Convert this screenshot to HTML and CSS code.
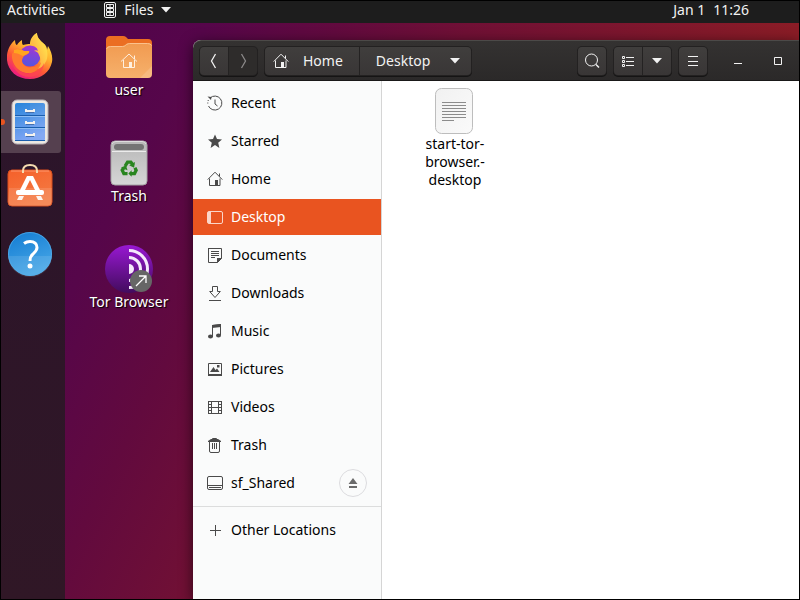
FILE: index.html
```html
<!DOCTYPE html>
<html lang="en">
<head>
<meta charset="utf-8">
<title>Files</title>
<link rel="stylesheet" href="styles.css">
</head>
<body>
<svg class="defs" aria-hidden="true">
  <symbol id="home" viewBox="0 0 16 16">
    <path d="M.7 8.6 8 1.2l7.3 7.4M12.5 5.500V2.500M2.500 7.500v7h10.500v-7" fill="none" stroke="currentColor"/>
    <path d="M8 9h3v6H8z" fill="currentColor"/>
  </symbol>
  <symbol id="caret" viewBox="0 0 10 6"><path d="M0 0h10L5 5.500z" fill="currentColor"/></symbol>
</svg>
<div class="screen">
  <header class="topbar">
    <button class="activities">Activities</button>
    <button class="app-menu">
      <svg width="12" height="16" viewBox="0 0 12 16" fill="none" stroke="currentColor"><rect x=".5" y=".5" width="11" height="15" rx="1.500"/><path d="M2.500 2.500h7v3h-7zM2.500 6.500h7v3h-7zM2.500 10.500h7v3h-7zM5 4h2M5 8h2M5 12h2"/></svg>
      <span>Files</span>
      <svg width="10" height="6"><use href="#caret"/></svg>
    </button>
    <button class="clock"><span>Jan 1</span><span>11:26</span></button>
  </header>
  <div class="workspace">
    <nav class="dock" aria-label="Dock">
      <button class="tile" aria-label="Firefox">
        <svg width="46" height="46" viewBox="0 0 46 46">
          <defs>
            <linearGradient id="fa" x1=".8" y1="0" x2=".25" y2="1"><stop offset="0" stop-color="#fff14a"/><stop offset=".4" stop-color="#ffb02e"/><stop offset=".65" stop-color="#ff5a35"/><stop offset="1" stop-color="#e8138a"/></linearGradient>
            <linearGradient id="fb" x1=".6" y1="0" x2=".4" y2="1"><stop offset="0" stop-color="#a436d2"/><stop offset="1" stop-color="#5455e0"/></linearGradient>
            <linearGradient id="fc" x1="1" y1="0" x2="0" y2="1"><stop offset="0" stop-color="#fff44f"/><stop offset="1" stop-color="#ff9640"/></linearGradient>
          </defs>
          <path d="M8 7c0 3 1 5 2 5 1-2 3-4 5-5 0 3 0 4 1 5 3-1 5-1 7-1 0-5 3-9 7-11 0 5 3 7 6 10 3 2 4 4 4 7l1-4c3 5 5 10 4 16-2 10-11 17-22 17C10 46 1 38 0 27-1 19 3 11 8 7z" fill="url(#fa)"/>
          <circle cx="23" cy="23" r="10.500" fill="url(#fb)"/>
          <path d="M24 11c0-5 3-9 6-11 0 5 3 7 6 10 5 5 6 15 2 20-2 4-6 6-10 6 5-3 7-9 4-14-1-3-3-4-5-4 1-1 3-1 4 0-1-4-4-6-7-7z" fill="url(#fc)"/>
          <path d="M8 16c4-1 7 1 9 2h5c1 2-1 3-5 5-1 1-2 3-2 5 1 5 5 7 10 6 4 0 7-2 9-5-1 7-7 12-13 11C11 40 4 30 5 21z" fill="#ff7a2f"/>
          <path d="M7 17c4-2 8 0 10 1h5c1 2-2 3-6 5-4-2-6-3-9-3z" fill="#ffa51f"/>
          <path d="M5 29c4 8 11 13 19 11 7-1 11-5 13-10 0 8-7 14-15 14S7 38 5 29z" fill="#ff4650" opacity=".75"/>
        </svg>
      </button>
      <button class="tile active" aria-label="Files">
        <svg width="38" height="46" viewBox="0 0 38 46">
          <defs><linearGradient id="fd" x2=".3" y2="1"><stop stop-color="#2784da"/><stop offset="1" stop-color="#7ea5f4"/></linearGradient></defs>
          <rect x="1" y="1" width="36" height="44" rx="5" fill="#ece8e2" stroke="#b7aeb4"/>
          <rect x="4" y="4" width="30" height="38" rx="2" fill="url(#fd)"/>
          <path d="M19 4h15v38H19z" fill="#fff" opacity=".06"/>
          <path d="M4 16.500h30M4 28.500h30M4 41.500h30" stroke="#1b5ead"/>
          <path d="M4 17.500h30M4 29.500h30" stroke="#8dbdf5"/>
          <path d="M15 10v2h8v-2M15 22v2h8v-2M15 34v2h8v-2" fill="none" stroke="#f5f2ee" stroke-width="2"/>
          <path d="M15 13.500h8M15 25.500h8M15 37.500h8" stroke="#456fad"/>
        </svg>
      </button>
      <button class="tile" aria-label="Ubuntu Software">
        <svg width="46" height="50" viewBox="0 2 46 50">
          <defs><linearGradient id="sa" x2=".5" y2="1"><stop stop-color="#f5602a"/><stop offset="1" stop-color="#f47a42"/></linearGradient></defs>
          <rect x="1" y="9" width="44" height="36" rx="4" fill="url(#sa)" stroke="#d74d1c"/>
          <path d="M2 27h43v14q0 4-4 4H5q-4 0-4-4z" fill="#fff" opacity=".12"/>
          <path d="M4 10h38" stroke="#ff986e"/>
          <path d="M16 12V10q0-6 7-6t7 6v2" fill="none" stroke="#f5dbb0" stroke-width="2"/>
          <path d="M20 15h6l8 16h-5l-6-12-6 12h-5z" fill="#fff"/>
          <rect x="9" y="29" width="28" height="5" rx="2" fill="#fff"/>
          <path d="M12 35h5l-2 4h-5zM29 35h5l2 4h-5z" fill="#fff" opacity=".9"/>
        </svg>
      </button>
      <button class="tile" aria-label="Help">
        <svg width="46" height="46" viewBox="0 0 46 46">
          <defs><linearGradient id="ha" x2=".4" y2="1"><stop stop-color="#127bd2"/><stop offset="1" stop-color="#45a5e6"/></linearGradient></defs>
          <circle cx="23" cy="23" r="22" fill="url(#ha)"/>
          <path d="M1 25h44a22 21 0 0 1-44 0z" fill="#fff" opacity=".1"/>
          <circle cx="23" cy="23" r="21.500" fill="none" stroke="#56aeea" opacity=".7"/>
          <path d="M17 12.500c2-1.500 4-2 6-2 4.500 0 7 2.500 7 6 0 3-2 4.500-4 6.500-2 1.500-3 3-3 7" fill="none" stroke="#fff" stroke-width="3"/>
          <circle cx="23" cy="35" r="2.500" fill="#fff"/>
        </svg>
      </button>
    </nav>
    <main class="icons">
      <a class="desk-item" href="#user">
        <svg width="48" height="48" viewBox="0 0 48 48">
          <defs><linearGradient id="ua" y1="0" x2="0" y2="1"><stop stop-color="#f19a50"/><stop offset="1" stop-color="#f6b16c"/></linearGradient></defs>
          <path d="M1 18V7q0-4 4-4h13q2 0 3 1l2 2h20q4 0 4 4v10z" fill="#eb6e22"/>
          <path d="M1 17q0-4 4-4h12q2 0 3-1l1-1q2-1 3-1h19q4 0 4 3v28q0 4-4 4H5q-4 0-4-4z" fill="url(#ua)"/>
          <path d="M1.500 16q1-2.500 4-2.500h12q2 0 3-1l1-1q2-1 3-1h18q3 0 4 2" fill="none" stroke="#fbc18c"/>
          <path d="M47 33v8q0 4-4 4h-8z" fill="#fff" opacity=".15"/>
          <path d="m16 28.500 8-7.500 8 7.500M29.500 26v-3.500M18.500 27v7.500h11V27" fill="none" stroke="#fff0e0" stroke-width="1"/>
          <path d="M24 29h3v6h-3z" fill="#fff0e0"/>
        </svg>
        <span>user</span>
      </a>
      <a class="desk-item" href="#trash">
        <svg width="48" height="48" viewBox="0 0 48 48">
          <defs><linearGradient id="ta" y1="0" x2="0" y2="1"><stop stop-color="#b7b7b7"/><stop offset="1" stop-color="#d6d6d6"/></linearGradient></defs>
          <rect x="6" y="2" width="36" height="44" rx="4" fill="url(#ta)" stroke="#a5a3a4"/>
          <path d="M7 5q1-2.500 4-2.500h26q3 0 4 2.500" fill="none" stroke="#ddd"/>
          <rect x="9" y="5" width="30" height="6" rx="3" fill="#747474"/>
          <path d="M7 12.500h34" stroke="#ececec"/>
          <g transform="translate(4.500 5) scale(.82)">
            <path d="m19 27 3-5h4l3 4M31 29l1.500 3-2 4H26M22 36h-4.500l-2-4 2-3" fill="none" stroke="#29851f" stroke-width="4"/>
            <path d="m31 22-1 7-6-3zM27 32v8l-4-4zM14 29l6-3 2 6z" fill="#29851f"/>
          </g>
        </svg>
        <span>Trash</span>
      </a>
      <a class="desk-item" href="#tor">
        <svg width="48" height="48" viewBox="0 0 48 48">
          <defs>
            <linearGradient id="oa" y1="0" x2="0" y2="1"><stop stop-color="#9818d2"/><stop offset="1" stop-color="#420c5d"/></linearGradient>
            <clipPath id="ob"><path d="M24 0h24v48H24z"/></clipPath>
          </defs>
          <circle cx="24" cy="24" r="24" fill="url(#oa)"/>
          <g clip-path="url(#ob)" fill="none" stroke="#f5e9fb" stroke-width="3">
            <circle cx="24" cy="24" r="18.500"/><circle cx="24" cy="24" r="11.500"/><circle cx="24" cy="24" r="5" fill="#f5e9fb" stroke="none"/>
          </g>
          <circle cx="36" cy="36" r="11" fill="#666"/>
          <path d="m31 41 10-10M34 31h7v7" fill="none" stroke="#fff" stroke-width="1.300"/>
        </svg>
        <span>Tor Browser</span>
      </a>
    </main>
    <section class="window" aria-label="Files window">
      <div class="titlebar">
        <div class="group">
          <button class="btn" aria-label="Back"><svg width="16" height="16" viewBox="0 0 16 16"><path d="M9.500 1 5.500 8l4 7" fill="none" stroke="currentColor" stroke-width="1.300"/></svg></button>
          <button class="btn" aria-label="Forward" disabled><svg width="16" height="16" viewBox="0 0 16 16"><path d="m6.500 1 4 7-4 7" fill="none" stroke="currentColor" stroke-width="1.300"/></svg></button>
        </div>
        <div class="group path">
          <button class="btn crumb"><svg width="16" height="16"><use href="#home"/></svg><span>Home</span></button>
          <button class="btn crumb current"><span>Desktop</span><svg width="10" height="6"><use href="#caret"/></svg></button>
        </div>
        <div class="group tools">
          <button class="btn" aria-label="Search"><svg width="16" height="16" viewBox="0 0 16 16"><circle cx="7.500" cy="7" r="6" fill="none" stroke="currentColor"/><path d="m12 11.500 3 3" stroke="currentColor" stroke-width="1.500"/></svg></button>
        </div>
        <div class="group">
          <button class="btn" aria-label="List view"><svg width="14" height="14" viewBox="0 0 14 14" fill="none" stroke="currentColor"><path d="M1.500 2.500h2v2h-2zM1.500 6.500h2v2h-2zM1.500 10.500h2v2h-2z"/><path d="M5 3.500h8M5 7.500h8M5 11.500h8"/></svg></button>
          <button class="btn" aria-label="View options"><svg width="10" height="6"><use href="#caret"/></svg></button>
        </div>
        <div class="group">
          <button class="btn" aria-label="Menu"><svg width="10" height="10" viewBox="0 0 10 10"><path d="M0 .5h10M0 5.500h10M0 9.500h10" stroke="currentColor"/></svg></button>
        </div>
        <div class="controls">
          <button class="control" aria-label="Minimize"><svg width="8" height="10" viewBox="0 0 8 10"><path d="M0 7.500h8" stroke="currentColor"/></svg></button>
          <button class="control" aria-label="Maximize"><svg width="8" height="8" viewBox="0 0 8 8"><path d="M.5.5h7v7h-7z" fill="none" stroke="currentColor"/></svg></button>
        </div>
      </div>
      <div class="panes">
        <nav class="sidebar" aria-label="Places">
          <a class="place" href="#recent"><svg viewBox="0 0 16 16" fill="none" stroke="currentColor"><path d="M3 3a7 7 0 1 1-1.500 8M8 4.500V9l2.500 2"/><path d="M.8 8.500v-1M1.200 6V5" /><path d="M.5 1.500 4.500 2 4 5z" fill="currentColor" stroke="none"/></svg>Recent</a>
          <a class="place" href="#starred"><svg viewBox="0 0 16 16"><path d="m8 1.500 2 4.500 5 .5-3.800 3.200L12.400 15 8 12l-4.400 3 1.200-5.300L1 6.500 6 6z" fill="currentColor"/></svg>Starred</a>
          <a class="place" href="#home-folder"><svg><use href="#home"/></svg>Home</a>
          <a class="place selected" href="#desktop" aria-current="page"><svg viewBox="0 0 16 16"><rect x=".5" y="2.500" width="15" height="12" rx="1.500" fill="none" stroke="currentColor"/><path d="M1 3h3v11H1z" fill="currentColor"/></svg>Desktop</a>
          <a class="place" href="#documents"><svg viewBox="0 0 16 16"><path d="M1.500 1v14.500h9l4-4V1.500H1" fill="none" stroke="currentColor"/><path d="M4 4.500h8M4 6.500h8M4 8.500h8M4 10.500h4" stroke="currentColor"/><path d="M10 16v-5h5z" fill="currentColor"/></svg>Documents</a>
          <a class="place" href="#downloads"><svg viewBox="0 0 16 16"><path d="M5.500 1.500h5v5h2.800L8 12.500 2.700 6.500h2.800zM2 15.500h12" fill="none" stroke="currentColor"/></svg>Downloads</a>
          <a class="place" href="#music"><svg viewBox="0 0 16 16"><path d="M5.500 14V2.500l8-1V12" fill="none" stroke="currentColor"/><path d="M5 2l9-1v3L5 5z" fill="currentColor"/><ellipse cx="3.500" cy="13.500" rx="2.500" ry="2" fill="currentColor"/><ellipse cx="11.500" cy="12.500" rx="2.500" ry="2" fill="currentColor"/></svg>Music</a>
          <a class="place" href="#pictures"><svg viewBox="0 0 16 16"><path d="M1.500 2.500h13v12h-13z" fill="none" stroke="currentColor"/><path d="M1 13h14v2H1zM3 11l3.500-5 2 3L10 7.500l2.500 3.500zM10 4h2.500v2.500H10z" fill="currentColor"/></svg>Pictures</a>
          <a class="place" href="#videos"><svg viewBox="0 0 16 16" fill="none" stroke="currentColor"><path d="M1.500 2v13M14.500 2v13M4.500 2v13M11.500 2v13M4 2.500h8M4 8.500h8M4 14.500h8"/><path d="M3 2v13M13 2v13" stroke-width="2" stroke-dasharray="1 2"/></svg>Videos</a>
          <a class="place" href="#trash-folder"><svg viewBox="0 0 16 16" fill="none" stroke="currentColor"><path d="M5.500 3V1.500h4V3M2.500 5v9q0 1.500 1.500 1.500h7q1.500 0 1.500-1.500V5M5.500 6v6M7.500 6v6M9.500 6v6"/><path d="M1 5V4l3-2h7l3 2v1z" fill="currentColor" stroke="none"/></svg>Trash</a>
          <div class="volume">
            <a class="place" href="#shared"><svg viewBox="0 0 16 16" fill="none" stroke="currentColor"><rect x=".5" y="1.500" width="15" height="13" rx="1.500"/><path d="M1 10.500h14M2 12.500h12"/></svg>sf_Shared</a>
            <button class="eject" aria-label="Eject"><svg width="10" height="10" viewBox="0 0 10 10"><path d="m5 0 4.500 6h-9zM1 8h8v2H1z" fill="currentColor"/></svg></button>
          </div>
          <hr class="rule">
          <a class="place" href="#other"><svg viewBox="0 0 16 16"><path d="M3 8.500h11M8.500 3v11" stroke="currentColor"/></svg>Other Locations</a>
        </nav>
        <div class="files">
          <a class="file" href="#start-tor-browser">
            <svg width="48" height="48" viewBox="0 0 48 48">
              <defs><linearGradient id="pa" x2="1" y2="1"><stop stop-color="#f1f1f1"/><stop offset="1" stop-color="#fafafa"/></linearGradient></defs>
              <rect x="4.500" y="1.500" width="37" height="45" rx="6" fill="url(#pa)" stroke="#bdbdbd"/>
              <path d="M11 15.500h24M11 18.500h24M11 21.500h24M11 24.500h24M11 27.500h24M11 30.500h24M11 33.500h12" stroke="#8c8c8c"/>
            </svg>
            <span>start-tor-<br>browser.-<br>desktop</span>
          </a>
        </div>
      </div>
    </section>
  </div>
</div>
</body>
</html>
```
FILE: styles.css
```css
* {
  box-sizing: border-box;
}

body {
  margin: 0;
  background: #000;
  color: #000;
  font: 14px/18px "Noto Sans", "Open Sans", sans-serif;
}

button {
  margin: 0;
  padding: 0;
  border: 0;
  background: none;
  color: inherit;
  font: inherit;
}

a {
  color: inherit;
  text-decoration: none;
}

svg {
  display: block;
  flex: none;
}

.defs {
  display: none;
}

.screen {
  display: flex;
  flex-direction: column;
  min-height: 100vh;
  padding: 1px;
}

.topbar {
  display: flex;
  align-items: flex-start;
  height: 22px;
  padding: 0 50px 0 6px;
  background: #1d1d1d;
  color: #f2f2f2;
}

.activities {
  margin-right: 39px;
}

.app-menu {
  display: flex;
  align-items: center;
  gap: 8px;
}

.clock {
  display: flex;
  gap: 8px;
  margin-left: auto;
}

.workspace {
  display: grid;
  grid-template-columns: 64px 128px minmax(0, 1fr);
  flex: 1;
  background: linear-gradient(117deg, #50024c 5%, #56064a 19%, #620a3e 31%, #701035 43%, #8a1c26 73%);
}

.dock {
  display: flex;
  flex-direction: column;
  gap: 4px;
  padding: 2px 4px 0 0;
  background: linear-gradient(#2b142b, #301726);
}

.tile {
  position: relative;
  display: flex;
  align-items: center;
  justify-content: center;
  height: 62px;
  padding-right: 2px;
  border-radius: 0 3px 3px 0;
}

.tile.active {
  background: #55404f;
}

.tile.active::before {
  content: "";
  position: absolute;
  left: 0;
  width: 4px;
  height: 6px;
  border-radius: 0 3px 3px 0;
  background: #e95420;
}

.icons {
  display: flex;
  flex-direction: column;
  gap: 40px;
  padding-top: 10px;
}

.desk-item {
  display: flex;
  flex-direction: column;
  align-items: center;
  color: #fff;
  text-shadow: 1px 1px 1px #000;
}

.window {
  display: flex;
  flex-direction: column;
  margin-top: 17px;
  border-radius: 8px 0 0 0;
  background: #fff;
  box-shadow: 0 3px 14px rgba(0, 0, 0, 0.6);
  clip-path: inset(-17px 0 0 -20px);
}

.titlebar {
  display: flex;
  align-items: center;
  gap: 8px;
  height: 41px;
  padding: 0 9px 0 7px;
  border-top: 1px solid #4c4a48;
  border-bottom: 1px solid #191818;
  border-radius: 8px 0 0 0;
  background: linear-gradient(#343231, #2b2929);
  color: #f2f2f2;
}

.group {
  display: flex;
  border-radius: 4px;
  background: #242222;
  box-shadow: 0 0 0 1px #232121, 0 1px 0 1px #151414;
  gap: 1px;
}

.btn {
  display: flex;
  align-items: center;
  justify-content: center;
  width: 28px;
  height: 28px;
  background: linear-gradient(#403e3d, #393636);
}

.btn:first-child {
  border-radius: 4px 0 0 4px;
}

.btn:last-child {
  border-radius: 0 4px 4px 0;
}

.btn:only-child {
  border-radius: 4px;
}

.btn:disabled {
  background: #2e2c2b;
  color: #8b8989;
}

.crumb {
  width: auto;
  gap: 14px;
  padding: 0 16px 0 8px;
}

.crumb.current {
  gap: 20px;
  padding: 0 11px 0 16px;
}

.tools {
  margin-left: auto;
}

.controls {
  display: flex;
  gap: 16px;
  padding-left: 11px;
}

.control {
  display: flex;
  align-items: center;
  justify-content: center;
  width: 24px;
  height: 28px;
}

.panes {
  display: flex;
  flex: 1;
}

.sidebar {
  display: flex;
  flex-direction: column;
  gap: 2px;
  width: 189px;
  padding-top: 4px;
  border-right: 1px solid #d5d5d5;
  background: #fafbfb;
}

.place {
  display: flex;
  align-items: center;
  flex: 1;
  gap: 8px;
  max-height: 36px;
  min-height: 36px;
  padding: 0 14px;
}

.place svg {
  width: 16px;
  height: 16px;
  color: #4a4a4a;
}

.place.selected {
  background: #e95420;
  color: #fff;
}

.place.selected svg {
  color: #fbd5c8;
}

.volume {
  display: flex;
  align-items: center;
  padding-right: 14px;
}

.eject {
  display: flex;
  align-items: center;
  justify-content: center;
  width: 28px;
  height: 28px;
  border: 1px solid #dcdcdf;
  border-radius: 50%;
  color: #6b6b6b;
}

.rule {
  width: 100%;
  height: 1px;
  margin: 3px 0;
  border: 0;
  background: #dcdddd;
}

.files {
  flex: 1;
  padding: 6px 18px;
}

.file {
  display: flex;
  flex-direction: column;
  align-items: center;
  width: 110px;
  text-align: center;
}
```
